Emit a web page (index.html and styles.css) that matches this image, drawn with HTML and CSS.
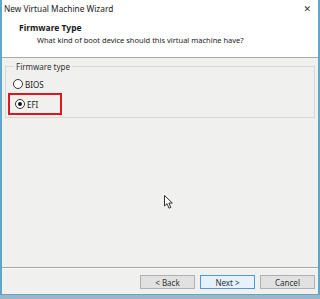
FILE: index.html
```html
<!DOCTYPE html>
<html lang="en">
<head>
  <meta charset="UTF-8" />
  <title>New Virtual Machine Wizard</title>
  <link rel="stylesheet" href="styles.css">
</head>
<body>

  <div class="window">
    <!-- Title bar -->
    <div class="titlebar">
      <span class="title">New Virtual Machine Wizard</span>
      <span class="close">&#x2715;</span>
    </div>

    <!-- Page header -->
    <div class="page-head">
      <div class="page-title">Firmware Type</div>
      <div class="page-sub">What kind of boot device should this virtual machine have?</div>
    </div>

    <!-- Body -->
    <div class="page-body">
      <fieldset class="group">
        <legend>Firmware type</legend>
        <label class="radio"><span class="dot"></span>BIOS</label>
        <label class="radio checked"><span class="dot"></span>EFI</label>
      </fieldset>
    </div>

    <!-- Buttons -->
    <div class="footer">
      <button class="btn">&lt; Back</button>
      <button class="btn primary">Next &gt;</button>
      <button class="btn">Cancel</button>
    </div>
  </div>

  <svg class="cursor" width="10" height="15" viewBox="0 0 10 15">
    <path d="M0.5 0.5 L0.5 11 L3 8.6 L5 13.2 L6.8 12.4 L4.9 8 L8.3 8 Z" fill="#fff" stroke="#333" stroke-width="1"/>
  </svg>

</body>
</html>
```

FILE: styles.css
```css
* {
  box-sizing: border-box;
  margin: 0;
  padding: 0;
}

body {
  width: 320px;
  height: 299px;
  overflow: hidden;
  background-color: #9db6c4;
  font-family: "Noto Sans", "DejaVu Sans", sans-serif;
  color: #1a1a1a;
  position: relative;
}

.window {
  width: 320px;
  height: 295px;
  border-left: 2px solid #5fa6cf;
  border-right: 2px solid #5fa6cf;
  border-bottom: 1px solid #5fa6cf;
  background-color: #f0f0ee;
  display: flex;
  flex-direction: column;
}

.titlebar {
  height: 20px;
  background: #fff;
  display: flex;
  align-items: center;
  justify-content: space-between;
  padding: 0 7px 4px 2px;
}

.title {
  font-size: 8.3px;
  color: #222;
}

.close {
  font-size: 9px;
  color: #333;
}

.page-head {
  height: 38px;
  background: #fff;
  border-bottom: 1px solid #a9a9a9;
  padding: 2px 0 0 17px;
}

.page-title {
  font-size: 8.5px;
  font-weight: bold;
  line-height: 12px;
}

.page-sub {
  font-size: 7.5px;
  line-height: 12px;
  padding-left: 18px;
}

.page-body {
  flex: 1;
  padding: 3px 3px 0 3px;
  border-bottom: 1px solid #a7a7a5;
}

.group {
  border: 1px solid #d8d8d6;
  padding: 4px 0 2px 4px;
  height: 57px;
  display: flex;
  flex-direction: column;
}

.group legend {
  font-size: 8px;
  color: #333;
  margin-left: 4px;
  padding: 0 2px;
}

.radio {
  display: flex;
  align-items: center;
  gap: 2px;
  font-size: 8px;
  height: 16px;
  padding-left: 3px;
}

.dot {
  width: 10px;
  height: 10px;
  border: 1px solid #333;
  border-radius: 50%;
  background: #fff;
  position: relative;
}

.radio.checked {
  width: 54px;
  height: 22px;
  margin-top: 1px;
  margin-left: -2px;
  padding-left: 5px;
  border: 2px solid #e0161e;
}

.radio.checked .dot::after {
  content: "";
  position: absolute;
  left: 2px;
  top: 2px;
  width: 4px;
  height: 4px;
  border-radius: 50%;
  background: #111;
}

.footer {
  height: 26px;
  border-top: 1px solid #fbfbfb;
  display: flex;
  justify-content: flex-end;
  gap: 5px;
  padding: 6px 3px 0 0;
}

.btn {
  width: 55px;
  height: 14px;
  font-family: "Noto Sans", "DejaVu Sans", sans-serif;
  font-size: 8px;
  color: #333;
  background: #e1e1e1;
  border: 1px solid #b0b0b0;
  border-radius: 0;
}

.btn.primary {
  background: #e5f1fb;
  border-color: #4d9ad6;
}

.cursor {
  position: absolute;
  left: 164px;
  top: 195px;
}
```
